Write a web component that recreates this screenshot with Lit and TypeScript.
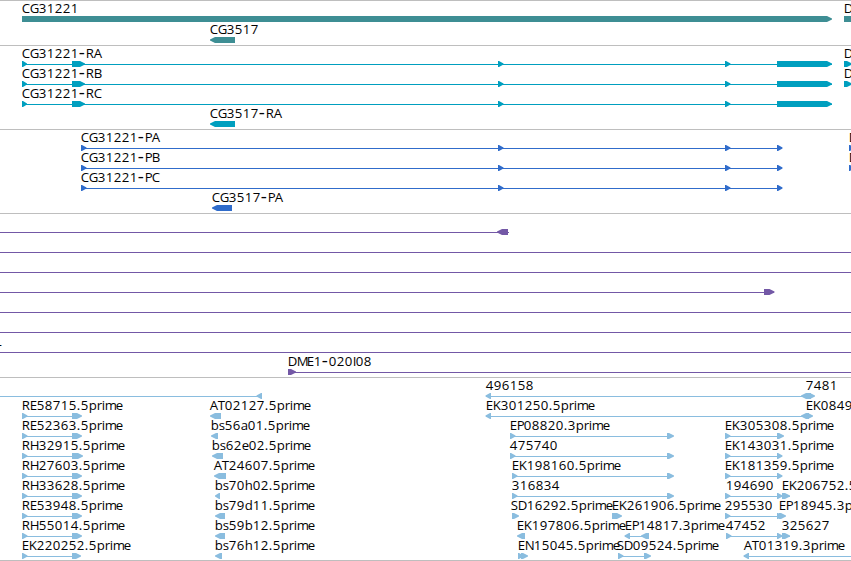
import { LitElement, css, html, svg } from 'lit';
import { customElement, property } from 'lit/decorators.js';

type Dir = 'left' | 'right';
type Block = [from: number, to: number, dir: Dir];

interface Row {
  labels?: [x: number, text: string][];
  lines?: [from: number, to: number][];
  blocks?: Block[];
}

interface Track {
  kind: string;
  rows: Row[];
}

// whole pixel advances, digits are all the same width
const ADVANCE: Record<string, number> = {
  A: 8, C: 8, D: 9, E: 7, G: 9, H: 9, I: 3, K: 8, L: 7, M: 10, N: 9, P: 7, R: 8, S: 7, T: 7,
  a: 7, b: 8, d: 8, e: 7, h: 8, i: 3, m: 11, p: 8, r: 5, s: 6, '.': 4, '-': 7,
};

// labels are drawn slightly extended
const STRETCH = 1.05;

const glyphPositions = (x: number, text: string) => {
  let pos = x - 0.3;
  return [...text].map((char) => {
    const current = pos;
    pos += ADVANCE[char] ?? 8;
    return (current / STRETCH).toFixed(2);
  }).join(' ');
};

const label = (x: number, text: string) => {
  const [name, suffix] = text.split('-');
  return svg`<text class="label" transform="scale(${STRETCH} 1)" x=${glyphPositions(x, text)} y="11">${name}${
    suffix ? svg`<tspan class="hyphen" dy="0.8">-</tspan><tspan dy="-0.8">${suffix}</tspan>` : ''
  }</text>`;
};

const blockPoints = ([from, to, dir]: Block) => {
  const head = Math.min(5, to - from - 1);
  return dir === 'right'
    ? `${from},14 ${to - head},14 ${to},16.4 ${to},17.4 ${to - head},20 ${from},20`
    : `${to},14 ${from + head},14 ${from},16.4 ${from},17.4 ${from + head},20 ${to},20`;
};

const transcript = (name: string, neighbour: boolean): Row => ({
  labels: neighbour ? [[22, name], [844, 'D']] : [[22, name]],
  lines: neighbour ? [[22, 832], [844, 851]] : [[22, 832]],
  blocks: [
    [22, 27, 'right'], [72, 85, 'right'], [498, 503.5, 'right'], [725, 730.5, 'right'], [777, 832, 'right'],
    ...(neighbour ? [[844, 852, 'right'] as Block] : []),
  ],
});

const protein = (name: string, neighbour: boolean): Row => ({
  labels: neighbour ? [[81, name], [849, 'D']] : [[81, name]],
  lines: [[81, 781]],
  blocks: [
    [81, 86.5, 'right'], [498, 503.5, 'right'], [725, 730.5, 'right'], [777, 782.5, 'right'],
    ...(neighbour ? [[849, 854, 'right'] as Block] : []),
  ],
});

// the 5' reads at the left all share a first exon
const est = (name: string, end: number, other: string, from: number, to: number, rest: Row): Row => ({
  labels: [[22, name], [from, other], ...(rest.labels ?? [])],
  lines: [[22, end - 2], ...(rest.lines ?? [])],
  blocks: [[22, 27.5, 'right'], [72, end, 'right'], [from, to, 'left'], ...(rest.blocks ?? [])],
});

const TRACKS: Track[] = [
  {
    kind: 'gene',
    rows: [
      { labels: [[22, 'CG31221'], [844, 'D']], blocks: [[22, 832, 'right'], [844, 860, 'right']] },
      { labels: [[210, 'CG3517']], blocks: [[210, 235, 'left']] },
    ],
  },
  {
    kind: 'transcript',
    rows: [
      transcript('CG31221-RA', true),
      transcript('CG31221-RB', true),
      transcript('CG31221-RC', false),
      { labels: [[210, 'CG3517-RA']], blocks: [[210, 235, 'left']] },
    ],
  },
  {
    kind: 'protein',
    rows: [
      protein('CG31221-PA', true),
      protein('CG31221-PB', true),
      protein('CG31221-PC', false),
      { labels: [[212, 'CG3517-PA']], blocks: [[212, 232, 'left']] },
    ],
  },
  {
    kind: 'clone',
    rows: [
      { lines: [[0, 509]], blocks: [[497, 508, 'left']] },
      { lines: [[0, 851]] },
      { lines: [[0, 851]] },
      { lines: [[0, 774]], blocks: [[764, 774.5, 'right']] },
      { lines: [[0, 851]] },
      { lines: [[0, 851]] },
      { labels: [[-5, 'L']], lines: [[0, 851]] },
      { labels: [[288, 'DME1-020I08']], lines: [[288, 851]], blocks: [[288, 296, 'right']] },
    ],
  },
  {
    kind: 'est',
    rows: [
      {
        labels: [[486, '496158'], [806, '7481']],
        lines: [[0, 262], [486, 806]],
        blocks: [[256.5, 262, 'left'], [485.5, 491, 'left'], [801, 811, 'left'], [806, 815, 'right']],
      },
      est('RE58715.5prime', 82, 'AT02127.5prime', 210, 221, {
        labels: [[486, 'EK301250.5prime'], [806, 'EK0849']],
        lines: [[486, 806]],
        blocks: [[485.5, 491, 'left'], [801, 809, 'left'], [806, 813, 'right']],
      }),
      est('RE52363.5prime', 82, 'bs56a01.5prime', 211, 218, {
        labels: [[510, 'EP08820.3prime'], [725, 'EK305308.5prime']],
        lines: [[510, 673], [725, 783]],
        blocks: [[510, 515.5, 'right'], [667, 674, 'right'], [725, 730.5, 'right'], [777, 784, 'right']],
      }),
      est('RH32915.5prime', 83, 'bs62e02.5prime', 212, 223, {
        labels: [[510, '475740'], [725, 'EK143031.5prime']],
        lines: [[510, 673], [725, 781]],
        blocks: [[510, 515.5, 'right'], [667, 674, 'right'], [725, 730.5, 'right'], [777, 782.5, 'right']],
      }),
      est('RH27603.5prime', 82, 'AT24607.5prime', 214, 226, {
        labels: [[512, 'EK198160.5prime'], [725, 'EK181359.5prime']],
        lines: [[512, 673], [725, 781]],
        blocks: [[512, 517.5, 'right'], [667, 674, 'right'], [725, 730.5, 'right'], [777, 782.5, 'right']],
      }),
      est('RH33628.5prime', 82, 'bs70h02.5prime', 215, 220, {
        labels: [[512, '316834'], [726, '194690'], [782, 'EK206752.5']],
        lines: [[512, 673], [725, 790]],
        blocks: [
          [512, 517.5, 'right'], [667, 674, 'right'], [725, 730.5, 'right'], [777, 782.5, 'right'], [782, 790, 'right'],
        ],
      }),
      est('RE53948.5prime', 82, 'bs79d11.5prime', 215, 225, {
        labels: [[511, 'SD16292.5prime'], [612, 'EK261906.5prime'], [725, '295530'], [779, 'EP18945.3p']],
        lines: [[725, 785]],
        blocks: [
          [512, 519, 'right'], [612, 622, 'right'], [725, 730.5, 'right'], [777, 782.5, 'right'], [779, 786, 'right'],
        ],
      }),
      est('RH55014.5prime', 82, 'bs59b12.5prime', 215, 225, {
        labels: [[517, 'EK197806.5prime'], [625, 'EP14817.3prime'], [726, '47452'], [782, '325627']],
        lines: [[625, 649], [726, 790]],
        blocks: [
          [517, 525, 'left'], [624.5, 630, 'left'], [641, 649, 'left'],
          [726, 731.5, 'right'], [777, 782.5, 'right'], [782, 790, 'right'],
        ],
      }),
      est('EK220252.5prime', 81, 'bs76h12.5prime', 215, 222, {
        labels: [[518, 'EN15045.5prime'], [617, 'SD09524.5prime'], [744, 'AT01319.3prime']],
        lines: [[618, 650], [744, 851]],
        blocks: [
          [518, 523.5, 'right'], [521, 528, 'right'], [618, 623.5, 'right'], [644, 651, 'right'], [743.5, 749, 'left'],
        ],
      }),
    ],
  },
];

@customElement('feature-track')
export class FeatureTrack extends LitElement {
  static styles = css`
    :host {
      display: flex;
      flex-direction: column;
      box-sizing: border-box;
      padding: 1px 0 2px;
      border-top: 1px solid #bebebe;
      color: #8abddf;
    }

    :host([kind='gene']) {
      --row-height: 21px;

      padding-bottom: 1px;
      color: #3e8e94;
    }

    :host([kind='transcript']) {
      color: #009fbf;
    }

    :host([kind='protein']) {
      color: #306ccb;
    }

    :host([kind='clone']) {
      color: #7358a6;
    }

    :host([kind='est']) {
      padding-bottom: 1px;
    }

    .row {
      display: block;
      width: 851px;
      height: var(--row-height, 20px);
      overflow: visible;
    }

    .shape {
      fill: currentColor;
    }

    .line {
      shape-rendering: crispEdges;
    }

    /* the opacity keeps the antialiasing grey */
    .label {
      fill: #000;
      font: 12.6px 'Open Sans', 'Noto Sans', sans-serif;
      opacity: 0.99;
    }

    .hyphen {
      font-size: 18px;
    }
  `;

  @property({ reflect: true }) kind = '';

  @property({ attribute: false }) rows: Row[] = [];

  render() {
    return this.rows.map(({ labels = [], lines = [], blocks = [] }) => html`
      <svg class="row">
        ${lines.map(([from, to]) => svg`<rect class="shape line" x=${from} y="17" width=${to - from} height="1" />`)}
        ${blocks.map((block) => svg`<polygon class="shape" points=${blockPoints(block)} />`)}
        ${labels.map(([x, text]) => label(x, text))}
      </svg>
    `);
  }
}

@customElement('app-root')
export class AppRoot extends LitElement {
  static styles = css`
    :host {
      display: flex;
      flex-direction: column;
      width: 851px;
      height: 561px;
      overflow: hidden;
      background: #fff;
    }

    .end {
      height: 1px;
      background: #bebebe;
    }
  `;

  render() {
    return html`
      ${TRACKS.map(({ kind, rows }) => html`<feature-track kind=${kind} .rows=${rows}></feature-track>`)}
      <div class="end"></div>
    `;
  }
}
